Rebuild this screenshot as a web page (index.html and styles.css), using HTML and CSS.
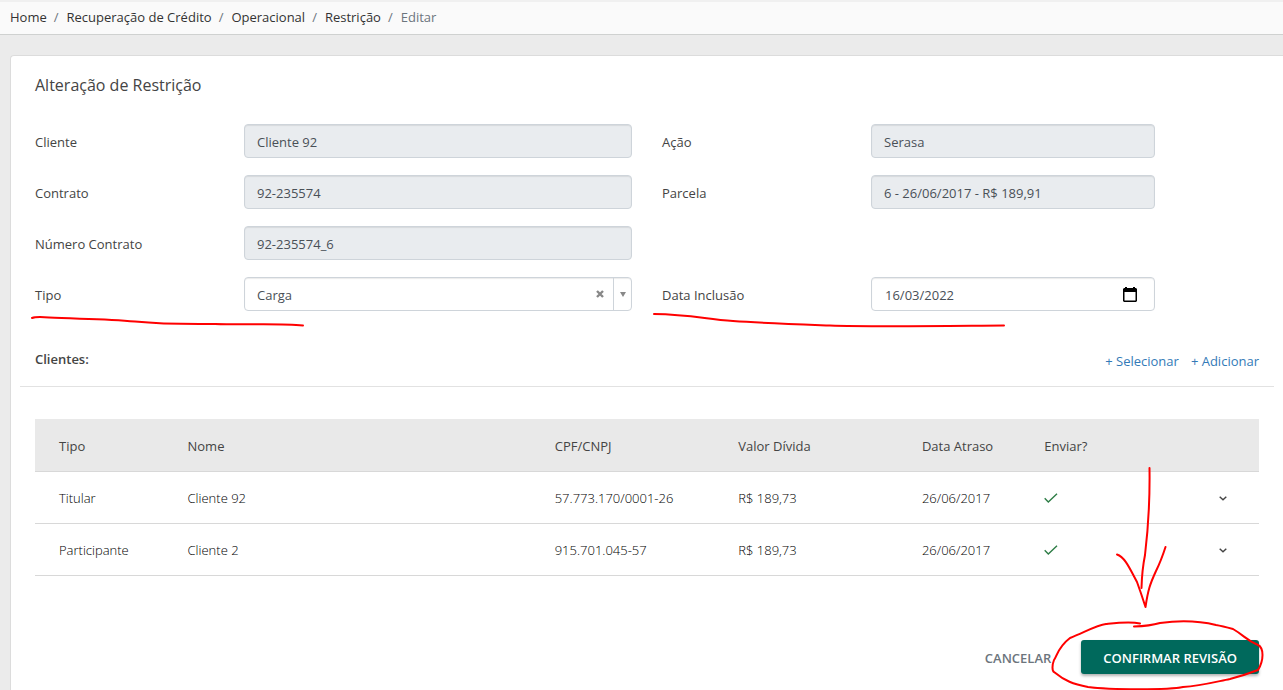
FILE: index.html
```html
<!DOCTYPE html>
<html lang="pt-BR">
<head>
<meta charset="utf-8">
<meta name="viewport" content="width=device-width, initial-scale=1">
<title>Alteração de Restrição</title>
<link rel="stylesheet" href="styles.css">
</head>
<body>
<nav class="breadcrumb-bar" aria-label="Navegação">
  <ol class="breadcrumb">
    <li><a href="#">Home</a></li>
    <li><a href="#">Recuperação de Crédito</a></li>
    <li><a href="#">Operacional</a></li>
    <li><a href="#">Restrição</a></li>
    <li aria-current="page">Editar</li>
  </ol>
</nav>
<main class="card">
  <h1 class="title">Alteração de Restrição</h1>
  <form>
    <div class="fields">
      <label class="label" for="cliente">Cliente</label>
      <input class="control wide" id="cliente" value="Cliente 92" disabled>
      <label class="label" for="acao">Ação</label>
      <input class="control narrow" id="acao" value="Serasa" disabled>

      <label class="label first" for="contrato">Contrato</label>
      <input class="control wide" id="contrato" value="92-235574" disabled>
      <label class="label" for="parcela">Parcela</label>
      <input class="control narrow" id="parcela" value="6 - 26/06/2017 - R$ 189,91" disabled>

      <label class="label first" for="numero">Número Contrato</label>
      <input class="control wide" id="numero" value="92-235574_6" disabled>

      <label class="label first" for="tipo">Tipo</label>
      <div class="control group wide">
        <select class="bare" id="tipo"><option>Carga</option></select>
        <button class="clear" type="button" aria-label="Limpar">
          <svg width="8" height="8" viewBox="0 0 8 8"><path d="M1 1l6 6M7 1L1 7" stroke="#888" stroke-width="2.4"/></svg>
        </button>
        <span class="caret"><svg width="6" height="5" viewBox="0 0 6 5"><path d="M0 0h6L3 5z" fill="#888"/></svg></span>
      </div>
      <label class="label" for="data">Data Inclusão</label>
      <div class="control group narrow">
        <input class="bare date" id="data" value="16/03/2022">
        <button class="calendar" type="button" aria-label="Abrir calendário">
          <svg width="14" height="15" viewBox="0 0 14 15"><path fill="#000" fill-rule="evenodd" d="M2 0h2v1h6V0h2v1h1l1 1v12l-1 1H1l-1-1V2l1-1h1zM1.500 5v8.500h11V5z"/></svg>
        </button>
      </div>
    </div>

    <div class="section-head">
      <h2 class="section-title">Clientes:</h2>
      <div class="links"><a href="#">+ Selecionar</a><a href="#">+ Adicionar</a></div>
    </div>

    <table class="clients">
      <colgroup><col class="c-type"><col class="c-name"><col class="c-doc"><col class="c-value"><col class="c-date"><col class="c-send"><col></colgroup>
      <thead>
        <tr><th>Tipo</th><th>Nome</th><th>CPF/CNPJ</th><th>Valor Dívida</th><th>Data Atraso</th><th>Enviar?</th><th></th></tr>
      </thead>
      <tbody>
        <tr>
          <td>Titular</td><td>Cliente 92</td><td>57.773.170/0001-26</td><td>R$ 189,73</td><td>26/06/2017</td>
          <td><svg class="check" width="14" height="10" viewBox="0 0 14 10" role="img" aria-label="Sim"><path d="M.7 5.300l3.600 3.700L13 .7" fill="none" stroke="#2e7d46" stroke-width="1.400"/></svg></td>
          <td class="actions"><button class="expand" type="button" aria-label="Expandir"><svg width="8" height="5" viewBox="0 0 8 5"><path d="M.7.700L4 3.800 7.300.700" fill="none" stroke="#444" stroke-width="1.400"/></svg></button></td>
        </tr>
        <tr>
          <td>Participante</td><td>Cliente 2</td><td>915.701.045-57</td><td>R$ 189,73</td><td>26/06/2017</td>
          <td><svg class="check" width="14" height="10" viewBox="0 0 14 10" role="img" aria-label="Sim"><path d="M.7 5.300l3.600 3.700L13 .7" fill="none" stroke="#2e7d46" stroke-width="1.400"/></svg></td>
          <td class="actions"><button class="expand" type="button" aria-label="Expandir"><svg width="8" height="5" viewBox="0 0 8 5"><path d="M.7.700L4 3.800 7.300.700" fill="none" stroke="#444" stroke-width="1.400"/></svg></button></td>
        </tr>
      </tbody>
    </table>

    <div class="footer">
      <button class="btn cancel" type="button">CANCELAR</button>
      <button class="btn confirm" type="submit">CONFIRMAR REVISÃO</button>
    </div>
  </form>
</main>
<svg class="marks" width="1283" height="690" viewBox="0 0 1283 690" aria-hidden="true">
  <path d="M32 318Q36 316.500 49 317.500C75 319 105 318.500 135 321.500S180 324 215 324C250 325 280 323 303 325.500"/>
  <path d="M654 314C690 314.500 705 319 733 321S790 324 830 325.500S940 326 1004 325.500"/>
  <path d="M1149.500 468C1150 500 1148 530 1145 555Q1142 570 1141.500 588M1117 554.500C1125 557 1130 569 1137 582Q1141 593 1145.500 607C1148 590 1150 584 1156 571Q1161 561 1165.500 547"/>
  <path d="M1140 623.500C1130 621 1115 623 1106 624S1085 632 1070 638C1058 647 1057 656 1054 660C1052 665 1052 671 1054 672C1065 681 1073 684 1088 687C1110 690 1170 690 1183 687C1200 686 1215 682 1230 679Q1245 675 1258 670C1264 660 1264 648 1258 645C1246 640 1245 636 1233 629Q1222 626 1216 625C1195 620 1175 621 1160 623Q1150 626 1134 626.500"/>
</svg>
</body>
</html>
```

FILE: styles.css
```css
* { box-sizing: border-box; }

body {
  margin: 0;
  min-height: 100vh;
  display: flex;
  flex-direction: column;
  position: relative;
  background: #ebebeb;
  color: #444;
  font-family: "Open Sans", "Noto Sans", sans-serif;
  font-size: 13px;
  line-height: 20px;
}

button, input, select { font: inherit; color: inherit; }
button { padding: 0; border: 0; background: none; cursor: pointer; }
a { text-decoration: none; }
svg { display: block; }

.breadcrumb-bar {
  padding: 5px 10px 7px;
  background: #fafafa;
  border-top: 2px solid #f0f0f0;
  border-bottom: 1px solid #cfd1d0;
}
.breadcrumb { display: flex; margin: 0; padding: 0; list-style: none; color: #6c757d; }
.breadcrumb li + li::before { content: "/"; padding: 0 8px 0 7px; color: #6c757d; }
.breadcrumb a { color: #333; }

.card {
  flex: 1;
  margin: 20px 0 0 10px;
  padding: 17px 24px 14px;
  background: #fff;
  border: 1px solid #dcdcdc;
  border-width: 1px 0 0 1px;
  border-radius: 4px 0 0 0;
}
.title { margin: 0 0 27px; font-size: 16px; font-weight: 400; line-height: 24px; }

.fields {
  display: grid;
  grid-template-columns: repeat(12, minmax(0, 1fr));
  gap: 17px 30px;
}
.label { grid-column: span 2; line-height: 36px; height: 34px; }
.label.first { grid-column: 1 / span 2; }
.wide { grid-column: span 4; }
.narrow { grid-column: span 3; }
.control {
  width: 100%;
  height: 34px;
  padding: 2px 12px 0;
  border: 1px solid #ced4da;
  border-radius: 4px;
  background: #fff;
  box-shadow: inset 0 1px 1px rgba(0, 0, 0, 0.08);
  color: #495057;
}
.control:disabled { background: #e9ecef; }
.group { display: flex; padding: 0; }
.bare {
  flex: 1;
  min-width: 0;
  padding: 2px 12px 0;
  border: 0;
  background: none;
  appearance: none;
  outline: 0;
}
.date { padding-left: 13px; }
.clear { display: grid; place-items: center; width: 26px; }
.caret {
  display: grid;
  place-items: center;
  width: 18px;
  border-left: 1px solid #ced4da;
}
.calendar { display: grid; place-items: center; width: 48px; }

.section-head {
  display: flex;
  justify-content: space-between;
  margin: 38px -15px 32px;
  padding: 0 15px 15px;
  border-bottom: 1px solid #e2e2e2;
}
.section-title { margin: 0; font-size: 13px; font-weight: 600; line-height: 20px; }
.links { display: flex; gap: 12px; padding-top: 2px; }
.links a { color: #337ab7; }

.clients { width: 100%; table-layout: fixed; border-collapse: collapse; }
.c-type { width: 10.500%; }
.c-name { width: 30%; }
.c-doc, .c-value { width: 15%; }
.c-date { width: 10%; }
.c-send { width: 9%; }
.clients th, .clients td {
  height: 52px;
  padding: 2px 0 0 24px;
  border-bottom: 1px solid #d8d8d8;
  text-align: left;
  white-space: nowrap;
}
.clients th { background: #e9e9e9; font-weight: 400; }
.clients td { color: #000; font-weight: 300; }
.clients .actions { padding-right: 24px; }
.expand { display: grid; place-items: center; width: 24px; height: 24px; margin-left: auto; }

.footer { display: flex; justify-content: flex-end; gap: 8px; margin-top: 64px; }
.btn { height: 34px; padding: 2px 22px 0; border-radius: 3px; font-weight: 600; }
.cancel { color: #6c757d; }
.confirm { background: #00695c; color: #fff; box-shadow: 0 2px 3px rgba(0, 0, 0, 0.3); }

.marks {
  position: absolute;
  top: 0;
  left: 0;
  pointer-events: none;
  fill: none;
  stroke: #f00;
  stroke-width: 2;
  stroke-linecap: round;
  stroke-linejoin: round;
}
```
